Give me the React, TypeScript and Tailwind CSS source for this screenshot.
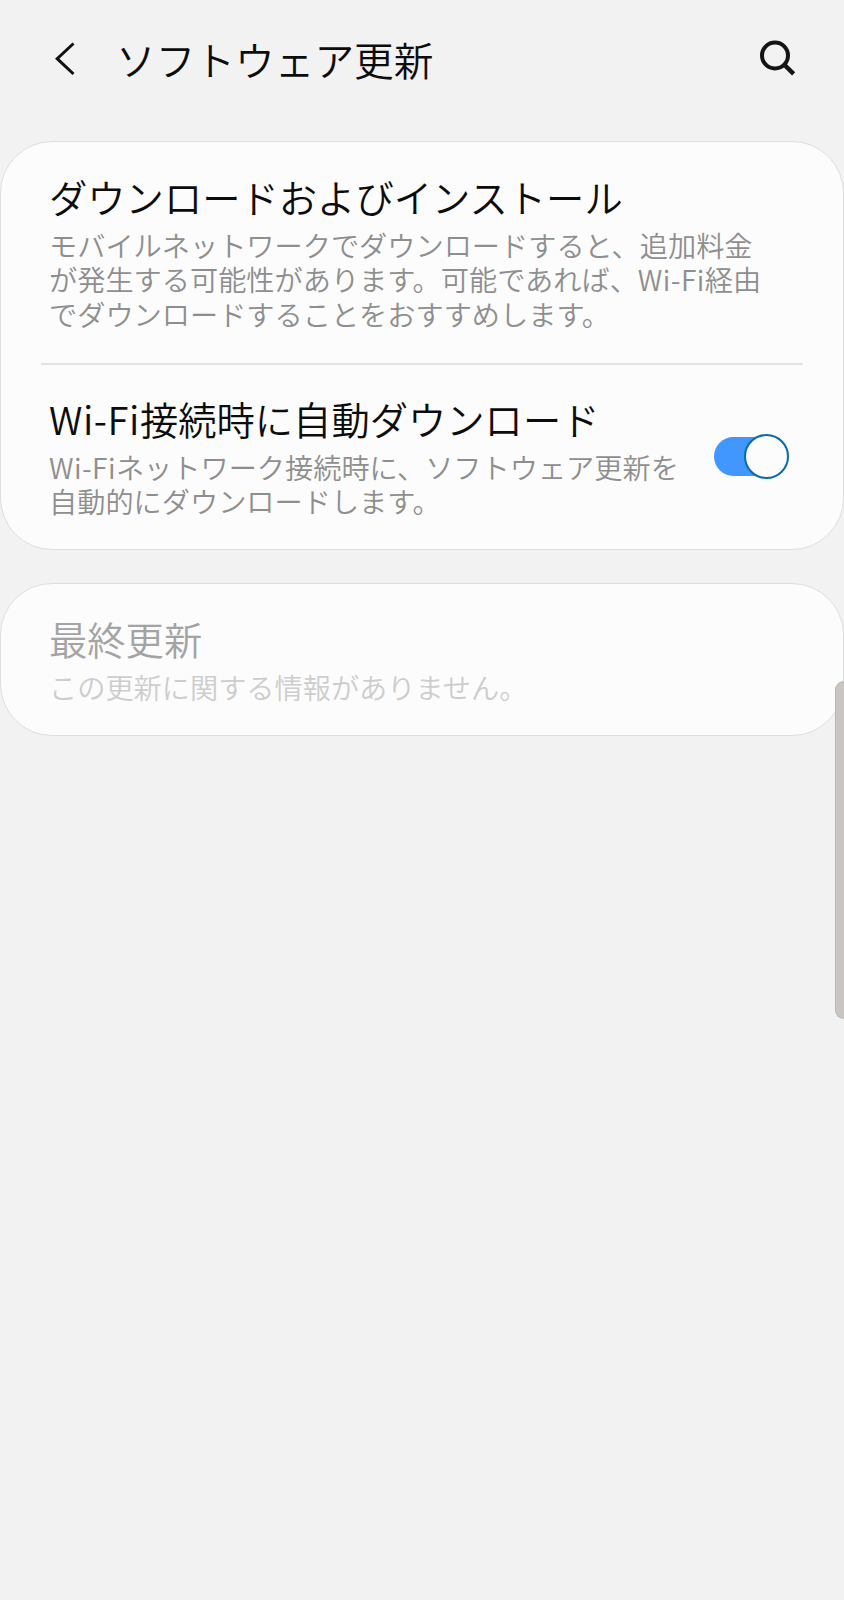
import React, { useState } from 'react';

const BackIcon = () => (
  <svg width="24" height="36" viewBox="0 0 24 36" fill="none" stroke="#111" strokeWidth="3">
    <path d="M20.5 2.5 L4.2 17.7 L20.5 33" />
  </svg>
);

const SearchIcon = () => (
  <svg width="40" height="40" viewBox="0 0 40 40" fill="none" stroke="#141414" strokeWidth="4">
    <circle cx="17" cy="16.5" r="13" />
    <path d="M26.2 25.7 L35.6 34.8" strokeWidth="4.4" />
  </svg>
);

interface ToggleProps {
  checked: boolean;
  onChange: (checked: boolean) => void;
}

const Toggle: React.FC<ToggleProps> = ({ checked, onChange }) => (
  <button
    role="switch"
    aria-checked={checked}
    onClick={() => onChange(!checked)}
    className="relative mt-[5px] h-[39px] w-[74px] shrink-0"
  >
    <span
      className={`block h-full w-full rounded-full ${checked ? 'bg-[#4297ff]' : 'bg-gray-300'}`}
    />
    <span
      className={`absolute -top-[3px] h-[45px] w-[45px] rounded-full border-2 bg-[#fcfcfc] ${
        checked ? '-right-px border-[#0968ae]' : '-left-px border-gray-400'
      }`}
    />
  </button>
);

// Latin runs get slightly wider tracking than the kana around them
const Latin: React.FC<{ children: React.ReactNode }> = ({ children }) => (
  <span className="tracking-[0.015em]">{children}</span>
);

interface SettingTextProps {
  title: React.ReactNode;
  lines: React.ReactNode[];
  disabled?: boolean;
}

const SettingText: React.FC<SettingTextProps> = ({ title, lines, disabled }) => (
  <div className="whitespace-nowrap">
    <h2
      className={`text-[38.3px] leading-[60px] ${disabled ? 'text-[#a3a3a3]' : 'text-[#0c0c0c]'}`}
    >
      {title}
    </h2>
    <p
      className={`pt-px text-[28.2px] leading-[34.4px] ${disabled ? 'text-[#cdcdcd]' : 'text-[#8e8e8e]'}`}
    >
      {lines.map((line, i) => (
        <span key={i} className="block">
          {line}
        </span>
      ))}
    </p>
  </div>
);

export default function App() {
  const [autoDownload, setAutoDownload] = useState(true);

  return (
    <div
      lang="ja"
      className="relative h-[1600px] w-[844px] overflow-hidden bg-[#f2f2f2] font-['Noto_Sans_CJK_JP',sans-serif] font-[350]"
    >
      <header className="flex h-[117px] items-center pr-[46px] pl-[53px]">
        <button aria-label="戻る">
          <BackIcon />
        </button>
        <h1 className="ml-[39px] flex-1 text-[39.7px] leading-[60px] text-[#0c0c0c]">
          ソフトウェア更新
        </h1>
        <button aria-label="検索">
          <SearchIcon />
        </button>
      </header>

      <main className="flex flex-col gap-[33px] pt-6">
        <section className="h-[409px] rounded-[52px] border border-[#dedede] bg-[#fcfcfc]">
          <div className="h-[221px] pt-[25px] pl-[48px]">
            <SettingText
              title="ダウンロードおよびインストール"
              lines={[
                'モバイルネットワークでダウンロードすると、追加料金',
                <>
                  が発生する可能性があります。可能であれば、<Latin>Wi-Fi</Latin>経由
                </>,
                'でダウンロードすることをおすすめします。',
              ]}
            />
          </div>
          <div className="mr-[40px] ml-[40px] h-[2px] bg-[#e3e3e3]" />
          <div className="flex items-center justify-between pt-[24px] pr-[55px] pl-[48px]">
            <SettingText
              title={
                <>
                  <Latin>Wi-Fi</Latin>接続時に自動ダウンロード
                </>
              }
              lines={[
                <>
                  <Latin>Wi-Fi</Latin>ネットワーク接続時に、ソフトウェア更新を
                </>,
                '自動的にダウンロードします。',
              ]}
            />
            <Toggle checked={autoDownload} onChange={setAutoDownload} />
          </div>
        </section>

        <section className="h-[153px] rounded-[52px] border border-[#dedede] bg-[#fcfcfc] pt-[25px] pl-[48px]">
          <SettingText title="最終更新" lines={['この更新に関する情報がありません。']} disabled />
        </section>
      </main>

      {/* edge panel handle */}
      <div className="absolute top-[681px] right-0 h-[338px] w-[9px] rounded-l-[10px] border border-r-0 border-[#b9b6b3] bg-[#c9c5c2]" />
    </div>
  );
}
